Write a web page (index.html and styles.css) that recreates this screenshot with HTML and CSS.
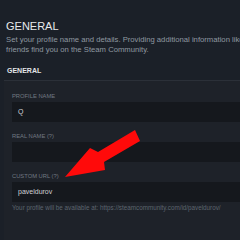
FILE: index.html
```html
<!DOCTYPE html>
<html>
<head>
<meta charset="utf-8">
<link rel="stylesheet" href="styles.css">
</head>
<body>
<div class="page">
  <h1 class="title">GENERAL</h1>
  <p class="desc">Set your profile name and details. Providing additional information like your real name can help<br>friends find you on the Steam Community.</p>
  <div class="section-head">GENERAL</div>
  <div class="panel">
    <div class="field">
      <div class="label">PROFILE NAME</div>
      <div class="input">Q</div>
    </div>
    <div class="field">
      <div class="label">REAL NAME (?)</div>
      <div class="input"></div>
    </div>
    <div class="field">
      <div class="label">CUSTOM URL (?)</div>
      <div class="input">paveldurov</div>
      <div class="hint">Your profile will be available at: https://steamcommunity.com/id/paveldurov/</div>
    </div>
  </div>
</div>
<svg class="arrow" width="240" height="240" viewBox="0 0 240 240">
  <polygon points="65,177 90,148 98,152 135,130 140,141 104,162 105,170" fill="#ff0a0a"/>
</svg>
</body>
</html>
```
FILE: styles.css
```css
html, body {
  margin: 0;
  padding: 0;
  width: 240px;
  height: 240px;
  overflow: hidden;
  background: #1b2028;
  font-family: "Liberation Sans", Arial, sans-serif;
}
.page {
  width: 420px;
  position: relative;
}
.title {
  margin: 0;
  padding: 20px 0 0 6px;
  font-size: 11px;
  line-height: 13px;
  font-weight: normal;
  color: #e8eaec;
}
.desc {
  margin: 2px 0 0 6px;
  font-size: 7.7px;
  line-height: 10px;
  color: #8f98a0;
  white-space: nowrap;
}
.section-head {
  margin-top: 11px;
  padding-left: 7px;
  font-size: 7px;
  line-height: 10px;
  font-weight: bold;
  color: #e4e6e8;
  height: 14px;
}
.panel {
  margin-left: 4px;
  border-top: 1px solid #2b3038;
  background: #1e2229;
  padding: 11px 0 40px 8px;
  display: flex;
  flex-direction: column;
  gap: 10px;
}
.label {
  font-size: 5.8px;
  line-height: 8px;
  color: #717982;
  margin-bottom: 2px;
}
.input {
  height: 20px;
  background: #15181d;
  padding-left: 6px;
  font-size: 7px;
  line-height: 20px;
  color: #cfd2d5;
}
.hint {
  margin-top: 2px;
  font-size: 6.3px;
  line-height: 8px;
  color: #5d656e;
  white-space: nowrap;
}
.arrow {
  position: absolute;
  top: 0;
  left: 0;
}
```
